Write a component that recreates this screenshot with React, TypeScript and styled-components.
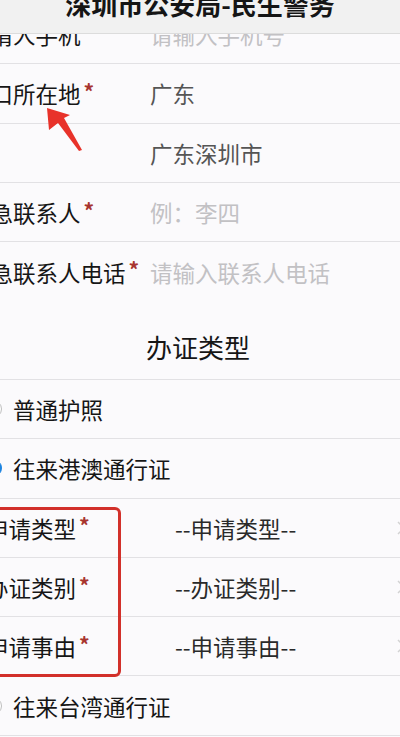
import styled, { createGlobalStyle } from 'styled-components';

const GlobalStyle = createGlobalStyle`
  html, body {
    margin: 0;
    padding: 0;
    background: #fbfafc;
    overflow: hidden;
  }
  body {
    font-family: "Noto Sans CJK SC", "Noto Sans", sans-serif;
    color: #1c1c1c;
  }
`;

interface Field {
  label: string;
  value: string;
  placeholder?: boolean;
  noBorder?: boolean;
}

const fields: Field[] = [
  { label: '申请人手机', value: '请输入手机号', placeholder: true },
  { label: '户口所在地', value: '广东' },
  { label: '', value: '广东深圳市' },
  { label: '紧急联系人', value: '例：李四', placeholder: true },
  { label: '紧急联系人电话', value: '请输入联系人电话', placeholder: true, noBorder: true },
];

const subFields = [
  { label: '申请类型', value: '--申请类型--' },
  { label: '办证类别', value: '--办证类别--' },
  { label: '申请事由', value: '--申请事由--' },
];

const App = () => {
  return (
    <Screen>
      <GlobalStyle />
      <TopBar>
        <TopTitle>深圳市公安局-民生警务</TopTitle>
      </TopBar>

      <Sheet>
        {fields.map((f, idx) => (
          <FieldRow key={idx} $noBorder={f.noBorder}>
            <Label>
              {f.label}
              {f.label && <Star>*</Star>}
            </Label>
            <Value $placeholder={f.placeholder}>{f.value}</Value>
          </FieldRow>
        ))}

        <SectionTitle>办证类型</SectionTitle>

        <RadioRow>
          <Radio />
          <RadioText>普通护照</RadioText>
        </RadioRow>
        <RadioRow>
          <Radio $checked />
          <RadioText>往来港澳通行证</RadioText>
        </RadioRow>

        {subFields.map((f) => (
          <SubRow key={f.label}>
            <SubLabel>
              {f.label}
              <Star>*</Star>
            </SubLabel>
            <SubValue>{f.value}</SubValue>
            <Chevron viewBox="0 0 8 14">
              <polyline points="1,1 7,7 1,13" />
            </Chevron>
          </SubRow>
        ))}

        <RadioRow>
          <Radio />
          <RadioText>往来台湾通行证</RadioText>
        </RadioRow>
      </Sheet>

      <Highlight />
      <Arrow viewBox="0 0 60 60">
        <polygon points="12,8 14,30 23,23 44,51 47,50 29,18 35,15" />
      </Arrow>
    </Screen>
  );
};

const Screen = styled.div`
  position: relative;
  width: 400px;
  height: 737px;
  overflow: hidden;
`;

const TopBar = styled.header`
  position: absolute;
  top: 0;
  left: 0;
  right: 0;
  height: 34px;
  z-index: 5;
  display: flex;
  align-items: flex-end;
  justify-content: center;
  box-sizing: border-box;
  padding-bottom: 16px;
  background: #f1f1f1;
  border-bottom: 1px solid #dcdcdc;
`;

const TopTitle = styled.h1`
  margin: 0;
  font-size: 26px;
  line-height: 26px;
  font-weight: 700;
  color: #151515;
  white-space: nowrap;
`;

const Sheet = styled.main`
  margin-left: -32px;
  width: 440px;
  padding-top: 5px;
`;

const rowBase = `
  display: flex;
  align-items: center;
  height: 59.3px;
  box-sizing: border-box;
  font-size: 22.5px;
  white-space: nowrap;
`;

const FieldRow = styled.div<{ $noBorder?: boolean }>`
  ${rowBase}
  border-bottom: ${(p) => (p.$noBorder ? 'none' : '1px solid #e2e1e4')};
`;

const Label = styled.div`
  width: 182px;
  flex-shrink: 0;
  display: flex;
  align-items: center;
  color: #161616;
`;

const Star = styled.span`
  color: #a8352f;
  font-size: 21px;
  line-height: 21px;
  font-weight: 700;
  margin-left: 3px;
  margin-top: -4px;
`;

const Value = styled.div<{ $placeholder?: boolean }>`
  color: ${(p) => (p.$placeholder ? '#c2c1c4' : '#555555')};
`;

const SectionTitle = styled.h2`
  margin: 0;
  height: 78.5px;
  box-sizing: border-box;
  display: flex;
  align-items: flex-end;
  justify-content: center;
  padding: 0 0 14px 20px;
  font-size: 26px;
  line-height: 36px;
  font-weight: 400;
  color: #161616;
  border-bottom: 1px solid #e2e1e4;
`;

const RadioRow = styled.label`
  ${rowBase}
  padding-left: 16px;
  gap: 11px;
  border-bottom: 1px solid #e2e1e4;
`;

const Radio = styled.span<{ $checked?: boolean }>`
  width: 18px;
  height: 18px;
  border-radius: 50%;
  box-sizing: border-box;
  flex-shrink: 0;
  border: 1.5px solid ${(p) => (p.$checked ? '#1d84e0' : '#bdbdbd')};
  background: ${(p) => (p.$checked ? '#1d84e0' : '#ffffff')};
`;

const RadioText = styled.span`
  color: #161616;
`;

const SubRow = styled.div`
  ${rowBase}
  padding-left: 18px;
  border-bottom: 1px solid #e2e1e4;
`;

const SubLabel = styled(Label)`
  width: 189px;
`;

const SubValue = styled.div`
  flex: 1;
  color: #2a2a2a;
`;

const Chevron = styled.svg`
  width: 8px;
  height: 14px;
  margin-right: 3px;
  fill: none;
  stroke: #d2d2d2;
  stroke-width: 1.5;
`;

const Highlight = styled.div`
  position: absolute;
  left: -5px;
  top: 507px;
  width: 126px;
  height: 170px;
  box-sizing: border-box;
  border: 3px solid #d2302a;
  border-radius: 6px;
  pointer-events: none;
`;

const Arrow = styled.svg`
  position: absolute;
  left: 35px;
  top: 100px;
  width: 60px;
  height: 60px;
  fill: #e8322a;
`;

export default App;
